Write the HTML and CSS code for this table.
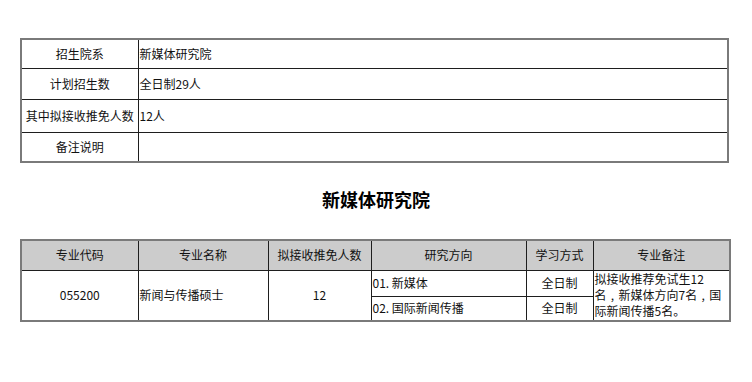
FILE: index.html
```html
<!DOCTYPE html>
<html lang="zh-CN">
<head>
<meta charset="utf-8">
<title>新媒体研究院</title>
<link rel="stylesheet" href="styles.css">
</head>
<body>
<div class="page">
  <table class="info">
    <colgroup><col class="c-label"><col></colgroup>
    <tr class="r1"><td class="label">招生院系</td><td class="val">新媒体研究院</td></tr>
    <tr class="r2"><td class="label">计划招生数</td><td class="val">全日制29人</td></tr>
    <tr class="r3"><td class="label">其中拟接收推免人数</td><td class="val">12人</td></tr>
    <tr class="r4"><td class="label">备注说明</td><td class="val"></td></tr>
  </table>

  <h1 class="title">新媒体研究院</h1>

  <table class="majors">
    <colgroup>
      <col class="m1"><col class="m2"><col class="m3"><col class="m4"><col class="m5"><col class="m6">
    </colgroup>
    <tr class="head">
      <th>专业代码</th><th>专业名称</th><th>拟接收推免人数</th><th>研究方向</th><th>学习方式</th><th>专业备注</th>
    </tr>
    <tr class="b1">
      <td class="center" rowspan="2">055200</td>
      <td class="left" rowspan="2">新闻与传播硕士</td>
      <td class="center" rowspan="2">12</td>
      <td class="left">01. 新媒体</td>
      <td class="center">全日制</td>
      <td class="left note" rowspan="2">拟接收推荐免试生12<br>名<span class="comma">,</span>新媒体方向7名<span class="comma">,</span>国<br>际新闻传播5名。</td>
    </tr>
    <tr class="b2">
      <td class="left">02. 国际新闻传播</td>
      <td class="center">全日制</td>
    </tr>
  </table>
</div>
</body>
</html>
```
FILE: styles.css
```css
html, body {
  margin: 0;
  padding: 0;
  background: #ffffff;
}
body {
  font-family: "Noto Sans CJK SC", "Noto Sans", sans-serif;
  font-size: 12px;
  color: #111;
}
.page {
  padding: 38px 0 0 20px;
}
table {
  border-collapse: collapse;
  width: 709px;
  table-layout: fixed;
  border: 2px solid #7a7a7a;
}
td, th {
  border: 1px solid #1e1e1e;
  padding: 0 2px;
  line-height: 16px;
  font-weight: normal;
  overflow: hidden;
}
.c-label { width: 117px; }
.label { text-align: center; }
.val { text-align: left; padding-left: 1px; }
.r1 { height: 29px; }
.r2 { height: 31px; }
.r3 { height: 33px; }
.r4 { height: 30px; }

.title {
  margin: 0;
  height: 76px;
  box-sizing: border-box;
  padding: 0 20px 4px 0;
  display: flex;
  align-items: center;
  justify-content: center;
  font-size: 18px;
  font-weight: bold;
  color: #000;
}

.m1 { width: 117px; }
.m2 { width: 130px; }
.m3 { width: 103px; }
.m4 { width: 155px; }
.m5 { width: 67px; }
.m6 { width: 137px; }
.head { height: 30px; }
.head th { background: #cccccc; text-align: center; }
.b1 { height: 26px; }
.b2 { height: 25px; }
.center { text-align: center; }
.left { text-align: left; padding-left: 1px; }
.note { vertical-align: middle; }
.comma { display: inline-block; width: 12px; text-align: center; }
```
